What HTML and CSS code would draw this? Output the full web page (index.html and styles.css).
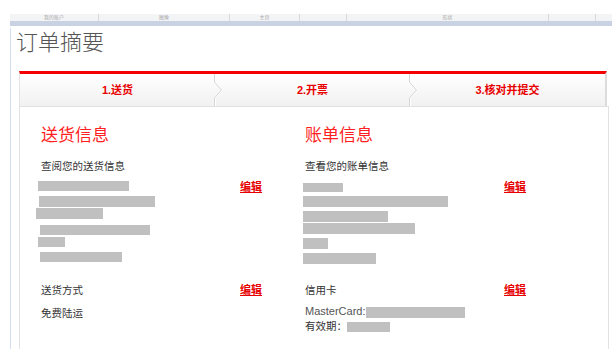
FILE: index.html
```html
<!DOCTYPE html>
<html lang="zh-CN">
<head>
  <meta charset="UTF-8">
  <meta name="viewport" content="width=device-width, initial-scale=1.0">
  <title>订单摘要</title>
  <link rel="stylesheet" href="styles.css">
</head>
<body>
  <div class="topnav">
    <div class="nav-item w1"><span>我的账户</span></div>
    <div class="nav-item w2"><span>图像</span></div>
    <div class="nav-item w3"><span>主页</span></div>
    <div class="nav-item w4"></div>
    <div class="nav-item w5"><span>形状</span></div>
    <div class="nav-item w4"></div>
    <div class="nav-item last"></div>
  </div>
  <div class="band"></div>

  <div class="page">
    <h1>订单摘要</h1>

    <div class="steps">
      <div class="step">1.送货
        <svg class="chev" width="10" height="32" viewBox="0 0 10 32"><polyline points="2.5,0 2.5,8 9.5,16 2.5,24 2.5,32" fill="none" stroke="#fff" stroke-width="1"/><polyline points="1.5,0 1.5,8 8.5,16 1.5,24 1.5,32" fill="none" stroke="#d6d6d6" stroke-width="1"/></svg>
      </div>
      <div class="step">2.开票
        <svg class="chev" width="10" height="32" viewBox="0 0 10 32"><polyline points="2.5,0 2.5,8 9.5,16 2.5,24 2.5,32" fill="none" stroke="#fff" stroke-width="1"/><polyline points="1.5,0 1.5,8 8.5,16 1.5,24 1.5,32" fill="none" stroke="#d6d6d6" stroke-width="1"/></svg>
      </div>
      <div class="step">3.核对并提交</div>
    </div>

    <div class="panel">
      <div class="summary">
        <h2>送货信息</h2>
        <h2>账单信息</h2>

        <div class="sub">查阅您的送货信息</div>
        <div class="sub">查看您的账单信息</div>

        <div class="block">
          <div class="hidden-lines">
            <div class="mask" style="width:91px;height:10px;margin:0 0 0 -3px"></div>
            <div class="mask" style="width:116px;height:11px;margin:5px 0 0 -2px"></div>
            <div class="mask" style="width:67px;height:11px;margin:1px 0 0 -5px"></div>
            <div class="mask" style="width:110px;height:10px;margin:6px 0 0 -1px"></div>
            <div class="mask" style="width:27px;height:10px;margin:2px 0 0 -3px"></div>
            <div class="mask" style="width:82px;height:10px;margin:5px 0 0 -1px"></div>
          </div>
          <a class="edit" href="#">编辑</a>
        </div>

        <div class="block">
          <div class="hidden-lines">
            <div class="mask" style="width:40px;height:9px;margin:2px 0 0 -2px"></div>
            <div class="mask" style="width:145px;height:11px;margin:4px 0 0 -2px"></div>
            <div class="mask" style="width:85px;height:11px;margin:4px 0 0 -2px"></div>
            <div class="mask" style="width:112px;height:11px;margin:1px 0 0 -2px"></div>
            <div class="mask" style="width:25px;height:11px;margin:4px 0 0 -2px"></div>
            <div class="mask" style="width:73px;height:11px;margin:4px 0 0 -2px"></div>
          </div>
          <a class="edit" href="#">编辑</a>
        </div>

        <div class="method">
          <div class="row">
            <span>送货方式</span>
            <a class="edit" href="#">编辑</a>
          </div>
          <div class="value">免费陆运</div>
        </div>

        <div class="method">
          <div class="row">
            <span>信用卡</span>
            <a class="edit" href="#">编辑</a>
          </div>
          <div class="card">
            <div class="card-line"><span class="latin">MasterCard:</span><span class="mask inline" style="width:99px;height:11px"></span></div>
            <div class="card-line"><span>有效期：</span><span class="mask inline" style="width:43px;height:10px"></span></div>
          </div>
        </div>
      </div>
    </div>
  </div>
</body>
</html>
```

FILE: styles.css
```css
body {
  margin: 0;
  background: #fff;
  font-family: "Liberation Sans", "Noto Sans CJK SC", sans-serif;
  color: #333;
  overflow: hidden;
}

/* top navigation, mostly scrolled out of view */
.topnav {
  margin: 14px 0 0 10px;
  height: 7px;
  background: #f3f4f6;
  display: flex;
  overflow: hidden;
}
.nav-item {
  border-right: 1px solid #d9d9d9;
  text-align: center;
  box-sizing: border-box;
}
.nav-item span {
  display: block;
  font-size: 5px;
  line-height: 7px;
  color: #a8a8a8;
}
.w1 { width: 89px; }
.w2 { width: 131px; }
.w3 { width: 70px; }
.w4 { width: 47px; }
.w5 { width: 202px; }
.last { flex: 1; border-right: none; }

.band {
  margin-left: 10px;
  height: 5px;
  background: #c9d2e2;
}

.page {
  margin-left: 10px;
  border-left: 1px solid #d2deee;
  padding: 0 3px 0 8px;
  min-height: 330px;
}

h1 {
  margin: 2px 0 13px -3px;
  font-size: 22px;
  line-height: 30px;
  font-weight: 300;
  color: #555;
}

/* step bar */
.steps {
  display: flex;
  height: 32px;
  margin-right: 2px;
  border-top: 3px solid #f40000;
  border-left: 1px solid #e3e3e3;
  border-right: 2px solid #dcdcdc;
  background: linear-gradient(#ffffff, #f1f1f1);
}
.step {
  flex: 1;
  position: relative;
  text-align: center;
  line-height: 32px;
  font-size: 11px;
  font-weight: bold;
  color: #e80000;
}
.chev {
  position: absolute;
  top: 0;
  right: -8px;
}

/* details panel */
.panel {
  border: 1px solid #e2e2e2;
  border-bottom: none;
  padding: 17px 0 30px 21px;
  background: #fff;
}
.summary {
  display: grid;
  grid-template-columns: 264px 1fr;
}
h2 {
  margin: 0;
  font-size: 17px;
  line-height: 24px;
  font-weight: normal;
  color: #ff1f1f;
}
.sub {
  margin-top: 10px;
  font-size: 10.5px;
  line-height: 16px;
}

.block {
  margin-top: 7px;
  display: grid;
  grid-template-columns: 199px auto;
  align-items: start;
}
.mask {
  background: #c0c0c0;
}
.mask.inline {
  display: inline-block;
  vertical-align: middle;
}

.edit {
  font-size: 11px;
  line-height: 12px;
  font-weight: bold;
  color: #e60000;
  text-decoration: underline;
  justify-self: start;
}

.method {
  margin-top: 18px;
  font-size: 10.5px;
}
.row {
  display: grid;
  grid-template-columns: 199px auto;
  align-items: center;
  line-height: 16px;
}
.value {
  margin-top: 7px;
  line-height: 16px;
}
.card {
  margin-top: 6px;
}
.card-line {
  line-height: 15px;
}
.latin {
  font-size: 11px;
  color: #555;
}
```
